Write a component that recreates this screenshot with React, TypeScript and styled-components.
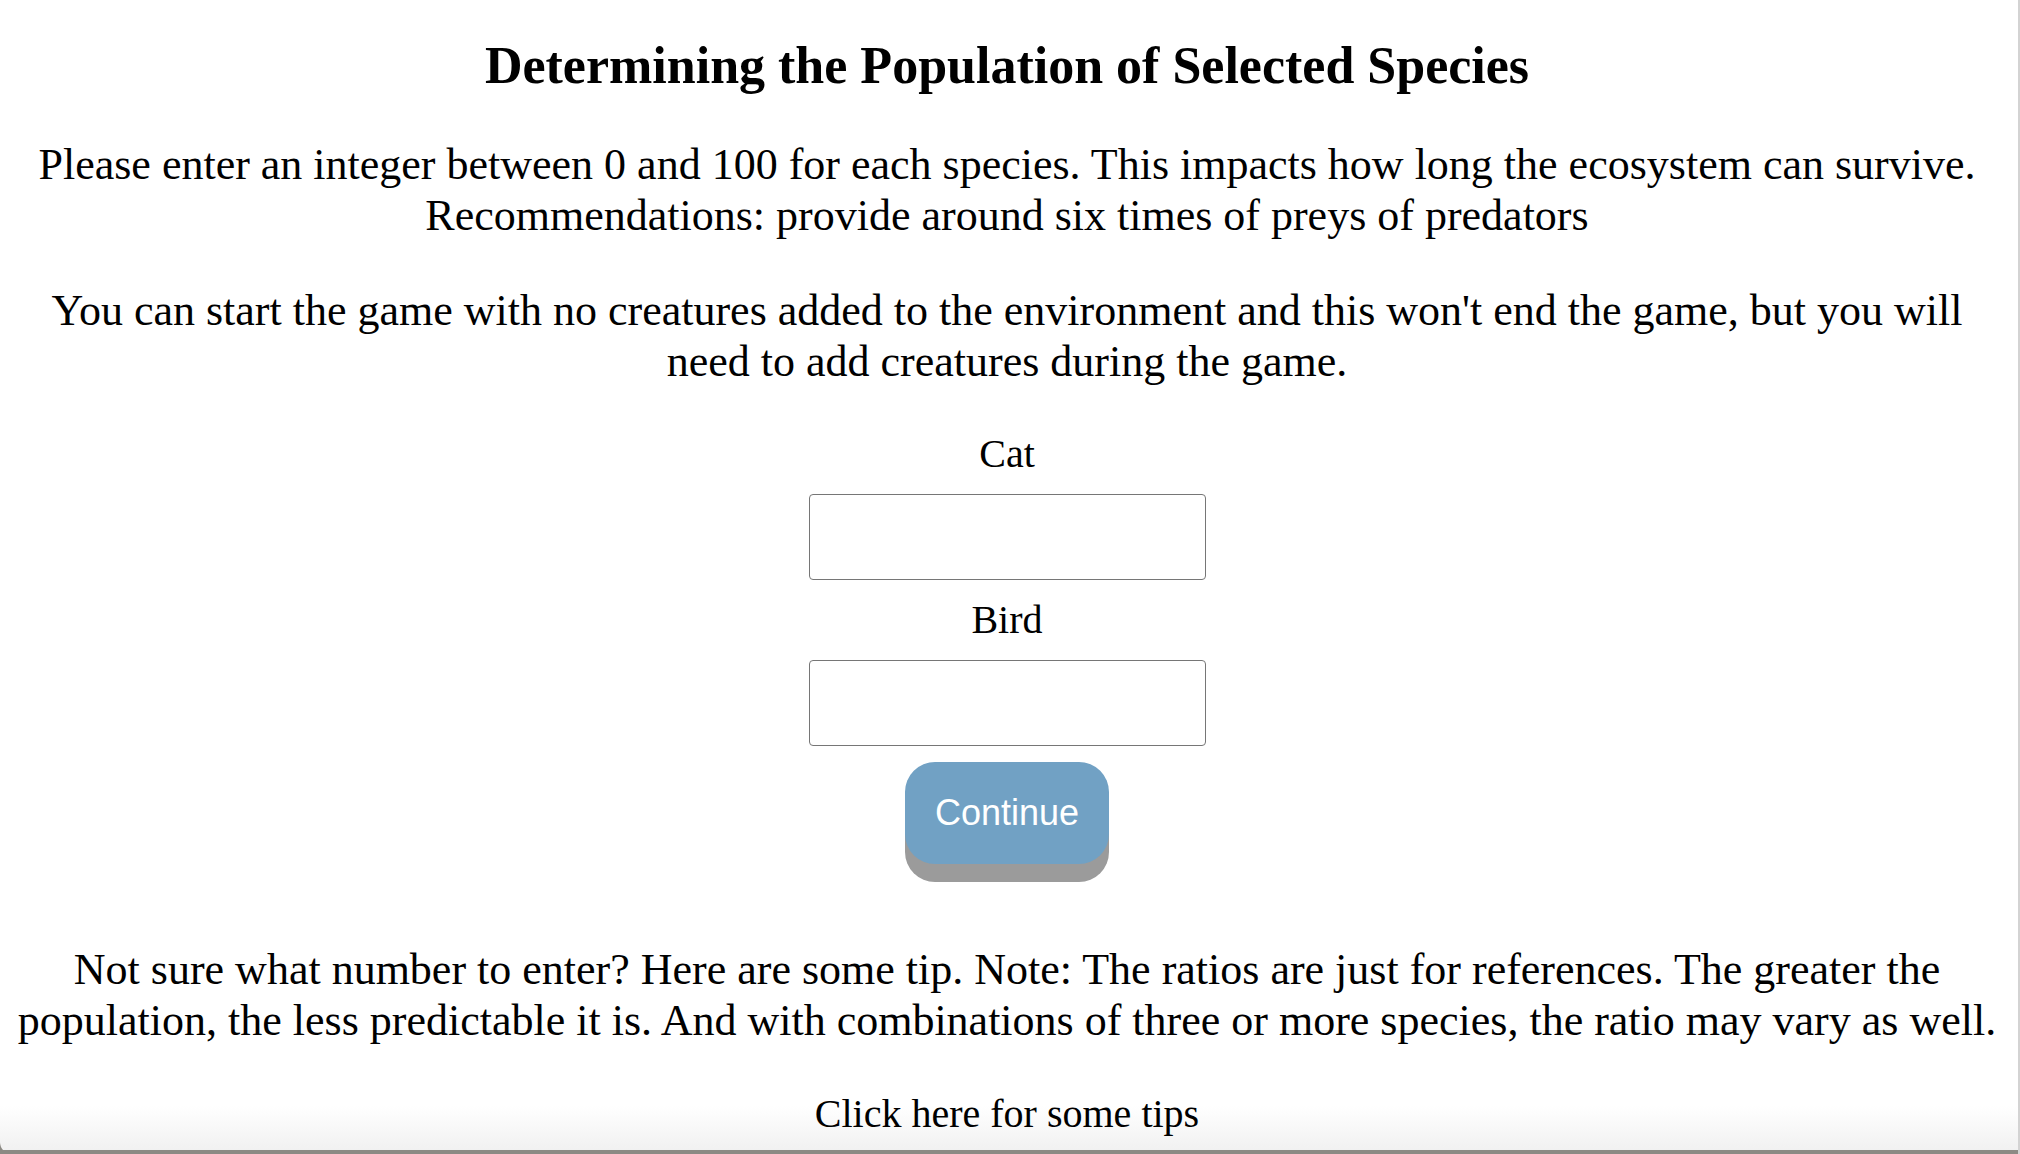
import React, { ChangeEvent, ReactElement, useState } from 'react';
import styled, { createGlobalStyle } from 'styled-components';

// Global
const GlobalStyle = createGlobalStyle`
  html {
    background: #8c8a84;
  }

  body {
    margin: 0;
    font-family: "Liberation Serif", "Times New Roman", serif;
    color: #000;
  }
`;

// Styled Components
const Page = styled.main`
  box-sizing: border-box;
  height: 100vh;
  overflow: hidden;
  padding: 36px 12px 0 8px;
  display: flex;
  flex-direction: column;
  align-items: center;
  text-align: center;
  border-right: 2px solid #d3d3d3;
  border-bottom-left-radius: 12px;
  background: linear-gradient(
    to bottom,
    #ffffff 0,
    #ffffff calc(100% - 48px),
    #f1f1f1 calc(100% - 4px),
    #8c8a84 calc(100% - 4px)
  );
`;

const Title = styled.h3`
  margin: 0 0 44px 0;
  font-size: 52px;
  font-weight: bold;
  line-height: normal;
`;

const Text = styled.p<{ $gap: number }>`
  margin: 0 0 ${({ $gap }) => $gap}px 0;
  font-size: 44px;
  line-height: normal;
`;

const Form = styled.form`
  display: flex;
  flex-direction: column;
  align-items: center;
  gap: 16.5px;
  margin-bottom: 80px;
`;

const Label = styled.label`
  display: block;
  font-size: 40px;
  line-height: normal;
`;

const NumberInput = styled.input`
  box-sizing: border-box;
  width: 397px;
  height: 86px;
  padding: 0 12px;
  border: 1px solid #767676;
  border-radius: 4px;
  font-size: 36px;
  font-family: "Liberation Sans", Arial, sans-serif;
  background: #fff;
`;

const ContinueButton = styled.button`
  width: 204px;
  height: 102px;
  border: none;
  border-radius: 30px;
  background: #71a1c4;
  box-shadow: 0 18px 0 #9b9b9b;
  color: #fff;
  font-family: "Liberation Sans", Arial, sans-serif;
  font-size: 36px;
  cursor: pointer;
`;

const TipsToggle = styled.button`
  margin-top: 44px;
  padding: 0;
  border: none;
  background: none;
  font-family: "Liberation Serif", "Times New Roman", serif;
  font-size: 40px;
  line-height: normal;
  color: #000;
  cursor: pointer;
`;

const species = ['Cat', 'Bird'];

const App = (): ReactElement => {
  const [counts, setCounts] = useState<Record<string, string>>({});

  const handleInput = (name: string) => (e: ChangeEvent<HTMLInputElement>) => {
    const { value } = e.target;
    setCounts((prev) => ({ ...prev, [name]: value }));
  };

  return (
    <>
      <GlobalStyle />
      <Page>
        <Title>Determining the Population of Selected Species</Title>
        <Text $gap={44}>
          Please enter an integer between 0 and 100 for each species. This
          impacts how long the ecosystem can survive.
          <br />
          Recommendations: provide around six times of preys of predators
        </Text>
        <Text $gap={43}>
          You can start the game with no creatures added to the environment
          and this won't end the game, but you will need to add creatures
          during the game.
        </Text>
        <Form onSubmit={(e) => e.preventDefault()}>
          {species.map((name) => (
            <React.Fragment key={name}>
              <Label htmlFor={name}>{name}</Label>
              <NumberInput
                id={name}
                type="text"
                value={counts[name] || ''}
                onChange={handleInput(name)}
              />
            </React.Fragment>
          ))}
          <ContinueButton type="submit">Continue</ContinueButton>
        </Form>
        <Text $gap={0}>
          Not sure what number to enter? Here are some tip. Note: The ratios
          are just for references. The greater the population, the less
          predictable it is. And with combinations of three or more species,
          the ratio may vary as well.
        </Text>
        <TipsToggle type="button">Click here for some tips</TipsToggle>
      </Page>
    </>
  );
};

export default App;
